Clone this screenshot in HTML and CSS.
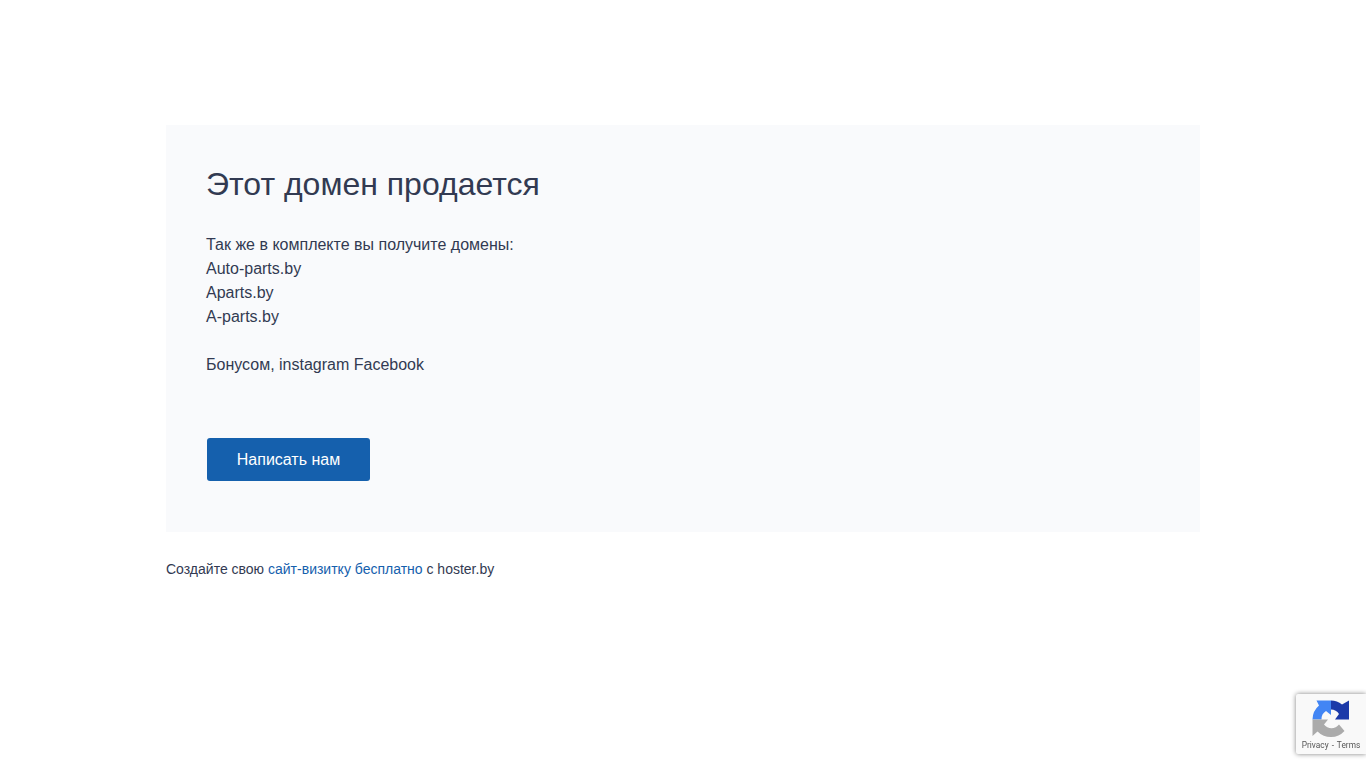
FILE: index.html
```html
<!DOCTYPE html>
<html lang="ru">
<head>
<meta charset="utf-8">
<title>Этот домен продается</title>
<link rel="stylesheet" href="styles.css">
</head>
<body>
<main class="page">
  <section class="card">
    <h1 class="title">Этот домен продается</h1>
    <p class="text">Так же в комплекте вы получите домены:<br>Auto-parts.by<br>Aparts.by<br>A-parts.by<br><br>Бонусом, instagram Facebook</p>
    <a class="button" href="#">Написать нам</a>
  </section>
  <p class="note">Создайте свою <a href="#">сайт-визитку бесплатно</a> с hoster.by</p>
</main>
<aside class="recaptcha">
  <svg class="logo" width="38" height="38" viewBox="0 0 38 38">
    <path d="M0.500 19.500 A18.500 18.500 0 0 1 7 5.500 L4.500 0.500 H19 V15 L14 11 A9.500 9.500 0 0 0 9.500 19.500 Z" fill="#4285f4"/>
    <path d="M19 0.500 A18.500 18.500 0 0 1 30 4.500 L37 0.500 V19.500 H23 L27 14 A9.500 9.500 0 0 0 19 9.500 Z" fill="#1c3aa9"/>
    <path d="M0.500 19.500 H16 L12 24.500 A9.500 9.500 0 0 0 27 24.500 L32.500 31 A18.500 18.500 0 0 1 5.500 31.500 L0.500 36 Z" fill="#ababab"/>
  </svg>
  <div class="links">Privacy <span class="dash">-</span> Terms</div>
</aside>
</body>
</html>
```
FILE: styles.css
```css
html, body { margin: 0; padding: 0; background: #fff; }
body { font-family: "Liberation Sans", Arial, sans-serif; color: #323a52; height: 768px; overflow: hidden; }
.page { width: 1034px; margin: 0 auto; padding-top: 125px; }
.card { background: #f9fafc; padding: 40px 40px 50px; height: 407px; box-sizing: border-box; }
.title { margin: 0; font-size: 32px; font-weight: 400; line-height: 38px; }
.text { margin: 30px 0 0; font-size: 16px; line-height: 24px; }
.button { display: inline-block; margin: 61px 0 0 1px; width: 163px; height: 43px; line-height: 43px; text-align: center; background: #1560ad; color: #fff; font-size: 16px; text-decoration: none; border-radius: 3px; }
.note { margin: 28px 0 0; font-size: 14px; line-height: 18px; }
.note a { color: #1560ad; text-decoration: none; }
.recaptcha { position: fixed; right: 0; top: 694px; width: 70px; height: 60px; background: #f9f9f9; box-shadow: 0 0 5px #808080; border-radius: 2px 0 0 2px; display: flex; flex-direction: column; align-items: center; }
.logo { margin-top: 6px; flex: none; }
.links { font-family: Roboto, "Liberation Sans", sans-serif; font-size: 8.3px; line-height: 14px; color: #555; white-space: nowrap; }
.dash { margin: 0 1px; }
```
